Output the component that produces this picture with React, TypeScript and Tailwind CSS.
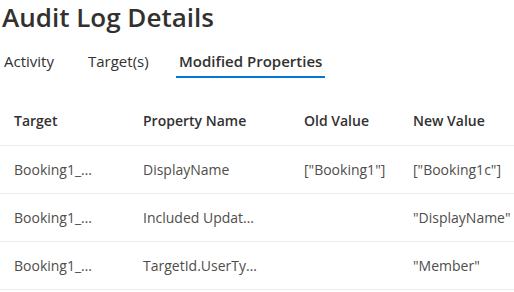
const rows = [
  { target: "Booking1_…", prop: "DisplayName", oldV: '["Booking1"]', newV: '["Booking1c"]' },
  { target: "Booking1_…", prop: "Included Updat…", oldV: "", newV: '"DisplayName"' },
  { target: "Booking1_…", prop: "TargetId.UserTy…", oldV: "", newV: '"Member"' },
];

const cols = "grid grid-cols-[143px_161px_109px_1fr]";

export default function App() {
  return (
    <div className="w-[514px] h-[292px] overflow-hidden bg-white text-[#323130] font-['Segoe_UI','Open_Sans',sans-serif]">
      <h1 className="pl-[2px] text-[26px] leading-[34px] font-semibold">Audit Log Details</h1>

      {/* tab strip */}
      <div className="mt-[17px] flex gap-[27px] pl-[1px] text-[15px] leading-[20px]">
        <div className="w-[57px] px-[3px]">
          <div>Activity</div>
          <div className="mt-[5px] h-[2px]" />
        </div>
        <div className="w-[64px] px-[3px]">
          <div>Target(s)</div>
          <div className="mt-[5px] h-[2px]" />
        </div>
        <div className="w-[149px]">
          <div className="px-[3px] font-semibold whitespace-nowrap">Modified Properties</div>
          <div className="mt-[5px] h-[2px] bg-[#0078d4]" />
        </div>
      </div>

      {/* properties table */}
      <div className="mt-[19px] text-[14px] leading-[20px]">
        <div className={`${cols} h-[49px] items-center border-b border-[#edebe9] font-semibold`}>
          <div className="pl-[14px]">Target</div>
          <div>Property Name</div>
          <div>Old Value</div>
          <div>New Value</div>
        </div>
        {rows.map((r, i) => (
          <div key={i} className={`${cols} h-[48px] items-center border-b border-[#edebe9] text-[#4f4d4b] whitespace-nowrap`}>
            <div className="pl-[14px]">{r.target}</div>
            <div>{r.prop}</div>
            <div>{r.oldV}</div>
            <div>{r.newV}</div>
          </div>
        ))}
      </div>
    </div>
  );
}
